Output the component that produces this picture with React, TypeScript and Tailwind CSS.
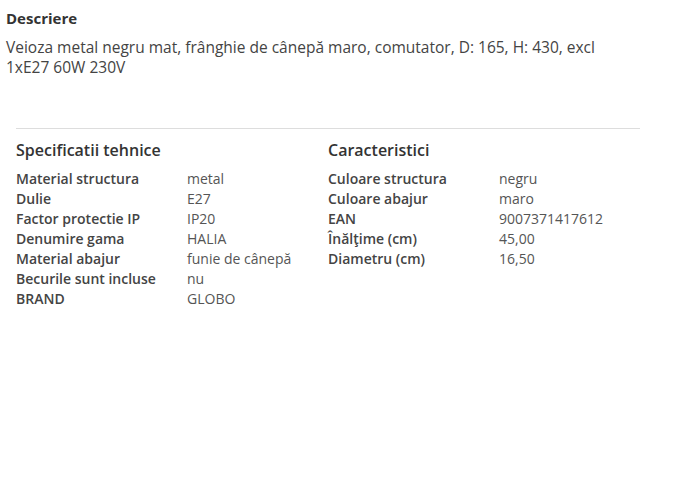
const specs: [string, string][] = [
  ['Material structura', 'metal'],
  ['Dulie', 'E27'],
  ['Factor protectie IP', 'IP20'],
  ['Denumire gama', 'HALIA'],
  ['Material abajur', 'funie de cânepă'],
  ['Becurile sunt incluse', 'nu'],
  ['BRAND', 'GLOBO'],
]

const traits: [string, string][] = [
  ['Culoare structura', 'negru'],
  ['Culoare abajur', 'maro'],
  ['EAN', '9007371417612'],
  ['Înălţime (cm)', '45,00'],
  ['Diametru (cm)', '16,50'],
]

function SpecTable({ title, rows }: { title: string; rows: [string, string][] }) {
  return (
    <div>
      <h3 className="text-[16px] font-semibold text-[#333] leading-[20px] mb-[9px]">{title}</h3>
      {rows.map(([k, v]) => (
        <div key={k} className="flex text-[14px] leading-[20px]">
          <span className="w-[171px] font-semibold text-[#444]">{k}</span>
          <span className="text-[#555]">{v}</span>
        </div>
      ))}
    </div>
  )
}

export default function App() {
  return (
    <div className="min-h-[489px] bg-white font-['Open_Sans',sans-serif] text-[#333]">
      <div className="px-[6px] pt-[8px]">
        <h2 className="text-[15px] font-bold leading-[20px] text-[#333]">Descriere</h2>
        <p className="mt-[9px] w-[620px] text-[15.5px] leading-[20px] text-[#444]">
          Veioza metal negru mat, frânghie de cânepă maro, comutator, D: 165, H: 430, excl 1xE27 60W 230V
        </p>
      </div>
      <div className="ml-[16px] mt-[51px] w-[624px] border-t border-[#ddd] pt-[11px]">
        <div className="grid grid-cols-2">
          <SpecTable title="Specificatii tehnice" rows={specs} />
          <SpecTable title="Caracteristici" rows={traits} />
        </div>
      </div>
    </div>
  )
}
